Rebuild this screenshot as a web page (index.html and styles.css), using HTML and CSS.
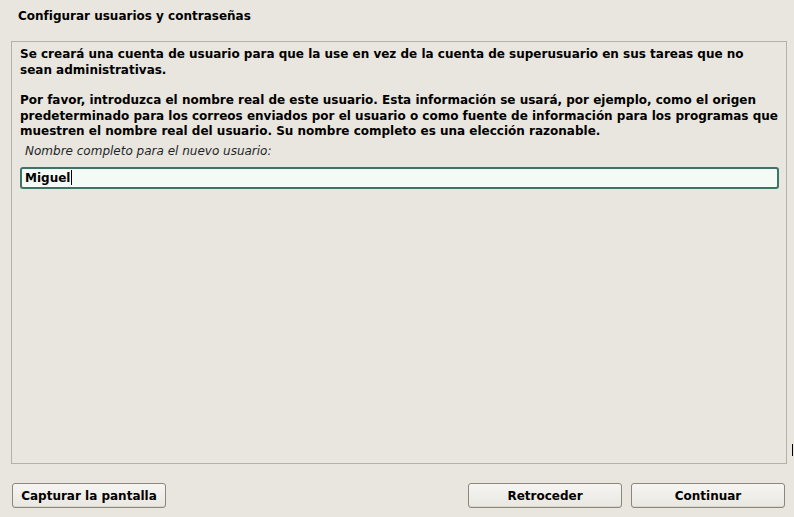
FILE: index.html
```html
<!DOCTYPE html>
<html lang="es">
<head>
<meta charset="utf-8">
<title>Configurar usuarios y contraseñas</title>
<link rel="stylesheet" href="styles.css">
</head>
<body>
<div class="window">
  <h1 class="title">Configurar usuarios y contraseñas</h1>
  <div class="panel">
    <p class="para">Se creará una cuenta de usuario para que la use en vez de la cuenta de superusuario en sus tareas que no sean administrativas.</p>
    <p class="para">Por favor, introduzca el nombre real de este usuario. Esta información se usará, por ejemplo, como el origen predeterminado para los correos enviados por el usuario o como fuente de información para los programas que muestren el nombre real del usuario. Su nombre completo es una elección razonable.</p>
    <div class="label">Nombre completo para el nuevo usuario:</div>
    <div class="entry"><span class="entry-text">Miguel</span><span class="caret"></span></div>
  </div>
  <div class="buttons">
    <button class="btn btn-shot">Capturar la pantalla</button>
    <div class="spacer"></div>
    <button class="btn">Retroceder</button>
    <button class="btn">Continuar</button>
  </div>
</div>
<span class="edge-mark"></span>
</body>
</html>
```
FILE: styles.css
```css
html, body {
  margin: 0;
  padding: 0;
  background: #e8e6df;
  font-family: "DejaVu Sans", sans-serif;
  color: #000;
  width: 794px;
  height: 517px;
  overflow: hidden;
}
.window {
  display: flex;
  flex-direction: column;
  height: 517px;
}
.title {
  margin: 0;
  font-size: 12px;
  font-weight: bold;
  padding: 9px 18px 0 18px;
  height: 32px;
  box-sizing: border-box;
  line-height: 15px;
}
.panel {
  margin: 9px 7px 0 11px;
  height: 423px;
  box-sizing: border-box;
  border: 1px solid #b5b1a6;
  padding: 5px 8px 0 8px;
}
.para {
  margin: 0 0 15px 0;
  font-size: 12px;
  font-weight: bold;
  line-height: 15.5px;
}
.para + .para {
  margin-bottom: 4px;
}
.label {
  font-size: 12px;
  font-style: italic;
  color: #1f2629;
  padding-left: 5px;
  line-height: 15px;
  height: 19px;
}
.entry {
  margin-top: 4px;
  width: 759px;
  height: 22px;
  box-sizing: border-box;
  border: 2px solid #3d7468;
  border-radius: 3px;
  background: #f4faf6;
  display: flex;
  align-items: center;
  padding-left: 3px;
  font-size: 12px;
  font-weight: bold;
}
.caret {
  display: inline-block;
  width: 1px;
  height: 15px;
  background: #000;
  margin-left: 1px;
}
.buttons {
  display: flex;
  margin: 19px 9px 0 12px;
  gap: 9px;
}
.spacer {
  flex: 1;
}
.btn {
  font-family: "DejaVu Sans", sans-serif;
  font-size: 12px;
  font-weight: bold;
  color: #000;
  width: 154px;
  height: 25px;
  border: 1px solid #8c877c;
  border-radius: 3px;
  background: linear-gradient(#f6f5f2, #e9e7e1);
  padding: 0;
  box-shadow: inset 0 -1px 0 #d8d5cc;
}
.edge-mark {
  position: absolute;
  left: 792px;
  top: 444px;
  width: 1px;
  height: 12px;
  background: #000;
}
```
